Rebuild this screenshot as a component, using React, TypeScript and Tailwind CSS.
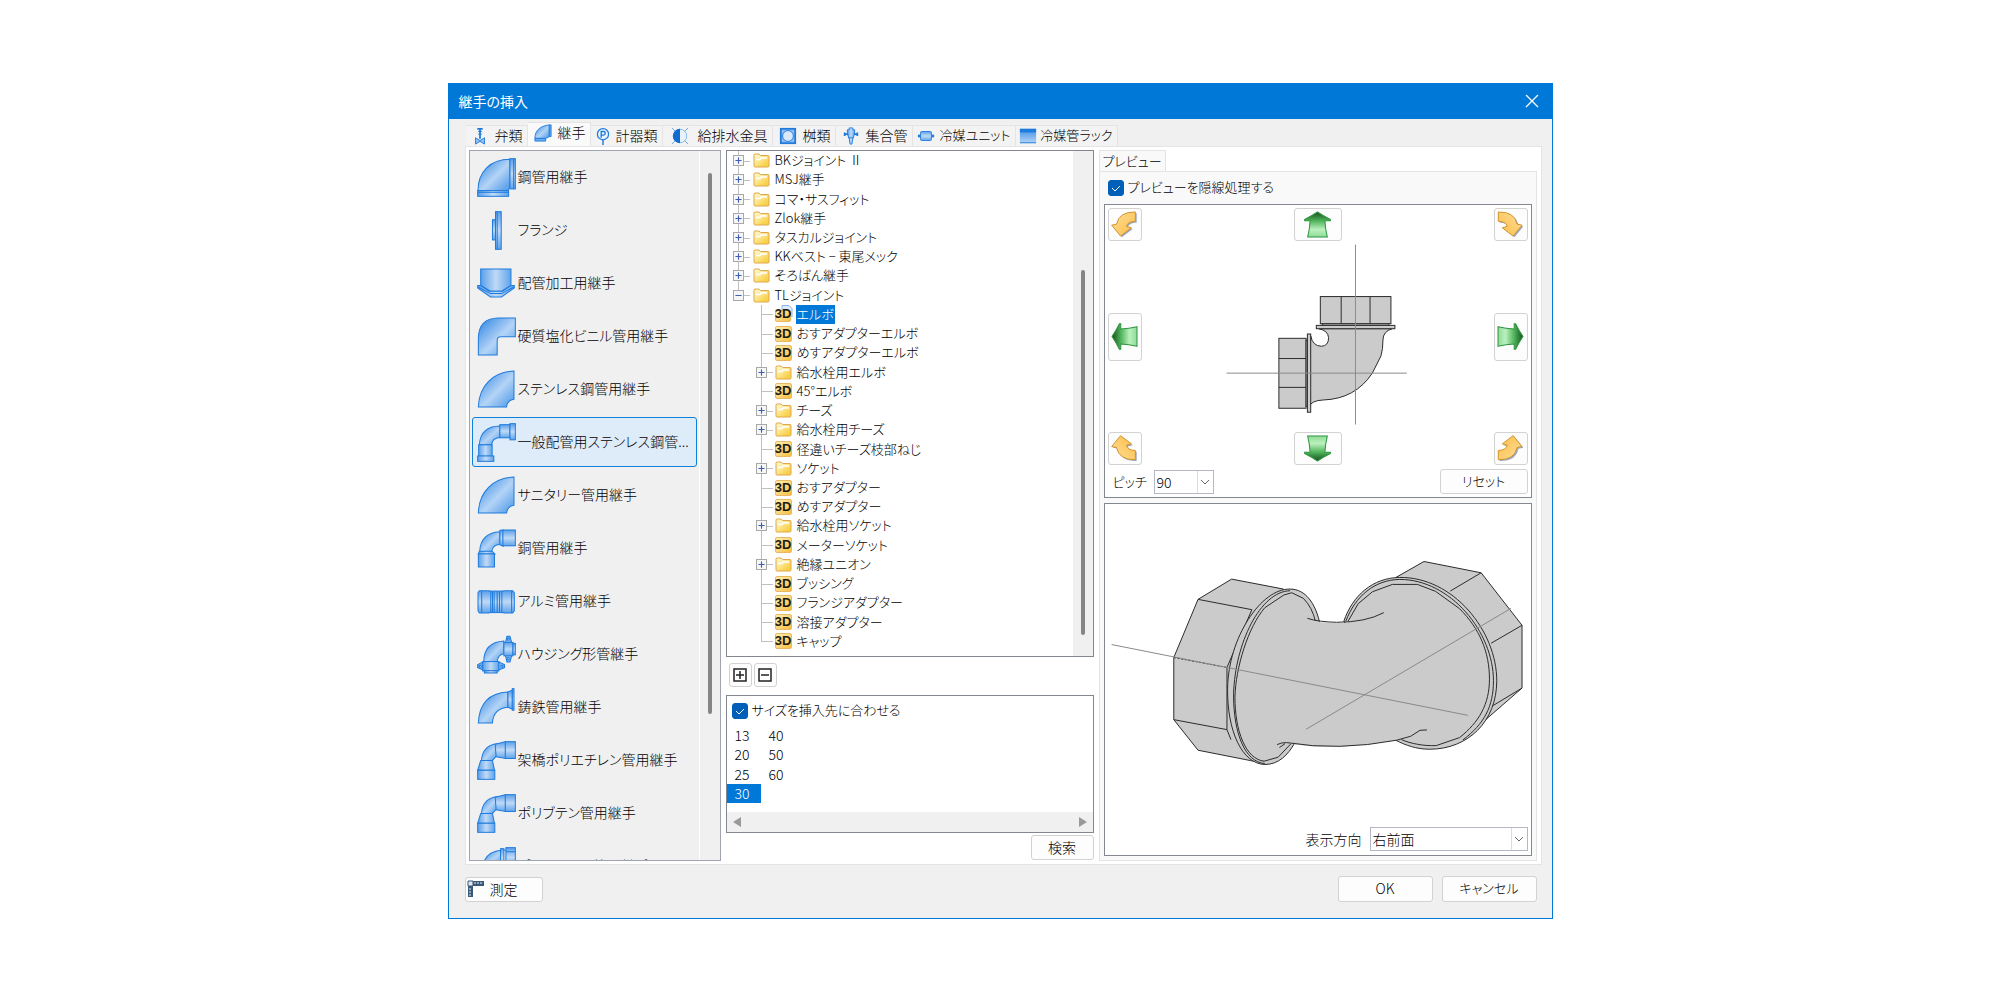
import type { ReactNode } from 'react';
import { Minus, Plus } from 'lucide-react';

const STROKE = '#1f7bdc';

const TABS = [
  { icon: 'valve', label: '弁類', width: 'w-[62px]' },
  { icon: 'elbow', label: '継手', width: 'w-[63px]' },
  { icon: 'meter', label: '計器類', width: 'w-[72px]' },
  { icon: 'fixture', label: '給排水金具', width: 'w-[110px]' },
  { icon: 'basin', label: '桝類', width: 'w-[63px]' },
  { icon: 'header', label: '集合管', width: 'w-[77px]' },
  { icon: 'unit', label: '冷媒ユニット', width: 'w-[103px] text-[13px]' },
  { icon: 'rack', label: '冷媒管ラック', width: 'w-[102px] text-[13px]' },
];

const CATEGORIES = [
  { icon: 'steel', label: '鋼管用継手' },
  { icon: 'flange', label: 'フランジ' },
  { icon: 'saddle', label: '配管加工用継手' },
  { icon: 'pvc', label: '硬質塩化ビニル管用継手' },
  { icon: 'stainless', label: 'ステンレス鋼管用継手' },
  { icon: 'press', label: '一般配管用ステンレス鋼管...' },
  { icon: 'stainless', label: 'サニタリー管用継手' },
  { icon: 'copper', label: '銅管用継手' },
  { icon: 'coupling', label: 'アルミ管用継手' },
  { icon: 'housing', label: 'ハウジング形管継手' },
  { icon: 'cast', label: '鋳鉄管用継手' },
  { icon: 'poly', label: '架橋ポリエチレン管用継手' },
  { icon: 'poly', label: 'ポリブテン管用継手' },
  { icon: 'union', label: 'ポリエチレン管用継手' },
];
const SELECTED_CATEGORY = 5;

type TreeNode = { level: 1 | 2; kind: 'folder' | 'model'; label: string };

const TREE: TreeNode[] = [
  { level: 1, kind: 'folder', label: 'BKジョイント Ⅱ' },
  { level: 1, kind: 'folder', label: 'MSJ継手' },
  { level: 1, kind: 'folder', label: 'コマ・サスフィット' },
  { level: 1, kind: 'folder', label: 'Zlok継手' },
  { level: 1, kind: 'folder', label: 'タスカルジョイント' },
  { level: 1, kind: 'folder', label: 'KKベスト − 東尾メック' },
  { level: 1, kind: 'folder', label: 'そろばん継手' },
  { level: 1, kind: 'folder', label: 'TLジョイント' },
  { level: 2, kind: 'model', label: 'エルボ' },
  { level: 2, kind: 'model', label: 'おすアダプターエルボ' },
  { level: 2, kind: 'model', label: 'めすアダプターエルボ' },
  { level: 2, kind: 'folder', label: '給水栓用エルボ' },
  { level: 2, kind: 'model', label: '45°エルボ' },
  { level: 2, kind: 'folder', label: 'チーズ' },
  { level: 2, kind: 'folder', label: '給水栓用チーズ' },
  { level: 2, kind: 'model', label: '径違いチーズ枝部ねじ' },
  { level: 2, kind: 'folder', label: 'ソケット' },
  { level: 2, kind: 'model', label: 'おすアダプター' },
  { level: 2, kind: 'model', label: 'めすアダプター' },
  { level: 2, kind: 'folder', label: '給水栓用ソケット' },
  { level: 2, kind: 'model', label: 'メーターソケット' },
  { level: 2, kind: 'folder', label: '絶縁ユニオン' },
  { level: 2, kind: 'model', label: 'ブッシング' },
  { level: 2, kind: 'model', label: 'フランジアダプター' },
  { level: 2, kind: 'model', label: '溶接アダプター' },
  { level: 2, kind: 'model', label: 'キャップ' },
];
const OPEN_NODE = 7;
const SELECTED_NODE = 8;

const SIZES = ['13', '20', '25', '30', '40', '50', '60'];
const SELECTED_SIZE = '30';

const BUTTON = 'rounded-[3px] border border-[#d2d2d2] bg-[#fdfdfd]';

/* Gradients shared by every icon on the page */
function Gradients() {
  return (
    <svg className="absolute h-0 w-0" aria-hidden="true">
      <defs>
        <linearGradient id="pipeX">
          <stop offset="0" stopColor="#5a9fea" />
          <stop offset="0.5" stopColor="#c0daf7" />
          <stop offset="1" stopColor="#5fa3eb" />
        </linearGradient>
        <linearGradient id="pipeY" x2="0" y2="1">
          <stop offset="0" stopColor="#5a9fea" />
          <stop offset="0.5" stopColor="#c0daf7" />
          <stop offset="1" stopColor="#5fa3eb" />
        </linearGradient>
        <linearGradient id="pipeD" x2="1" y2="1">
          <stop offset="0.1" stopColor="#4391e6" />
          <stop offset="0.55" stopColor="#b4d4f6" />
          <stop offset="0.9" stopColor="#5fa3eb" />
        </linearGradient>
        <linearGradient id="rackY" x2="0" y2="1">
          <stop offset="0" stopColor="#3f8fe4" />
          <stop offset="1" stopColor="#b4d4f6" />
        </linearGradient>
        <linearGradient id="folder" x2="1" y2="1">
          <stop offset="0.2" stopColor="#fff3b8" />
          <stop offset="0.8" stopColor="#f8d14a" />
        </linearGradient>
        <linearGradient id="green" x2="0" y2="1">
          <stop offset="0" stopColor="#174f20" />
          <stop offset="0.35" stopColor="#4fb45a" />
          <stop offset="0.7" stopColor="#baf0bd" />
          <stop offset="1" stopColor="#90dc98" />
        </linearGradient>
        <linearGradient id="amber" x2="1" y2="1">
          <stop offset="0" stopColor="#ffe09a" />
          <stop offset="1" stopColor="#fcbb45" />
        </linearGradient>
      </defs>
    </svg>
  );
}

const TAB_ICONS: Record<string, ReactNode> = {
  valve: (
    <>
      <path d="M7 2h6M10 2v11" stroke={STROKE} strokeWidth="2" />
      <path d="M8 5h4M8 8h4" stroke={STROKE} />
      <path d="M5 12v7l5-3 5 3v-7l-5 3z" fill="#8fbdf0" stroke={STROKE} />
    </>
  ),
  elbow: (
    <>
      <path d="M1 16C1 7 7 2 17 1v13l-4 2z" fill="url(#pipeD)" stroke={STROKE} />
      <path d="M17 1h2v13h-2zM1 16h12v3H1z" fill="#6aaaf0" stroke={STROKE} />
    </>
  ),
  meter: (
    <>
      <path d="M10 14v6" stroke={STROKE} strokeWidth="1.6" />
      <circle cx="10" cy="8" r="6.2" fill="#eaf3fd" stroke={STROKE} strokeWidth="1.4" />
      <path d="M8 12V5h2.500q2 0 2 2t-2 2H8" fill="none" stroke={STROKE} strokeWidth="1.500" />
    </>
  ),
  fixture: (
    <>
      <path d="M1 1l4 4M19 1l-4 4M1 19l4-4M19 19l-4-4" stroke="#5a9fea" />
      <circle cx="10" cy="10" r="7.500" fill="#e8f2fd" stroke="#7ab2ee" />
      <path d="M10 2a8 8 0 0 0 0 16z" fill="#0f6bd0" />
    </>
  ),
  basin: (
    <>
      <rect x="2" y="2" width="16" height="16" fill="#8fbdf0" stroke={STROKE} strokeWidth="2" />
      <circle cx="10" cy="10" r="6" fill="#d9e9fb" stroke={STROKE} />
    </>
  ),
  header: (
    <>
      <path d="M8 1h4v2h2v5l-2 5-1 6H9l-1-6-2-5V3h2z" fill="url(#pipeX)" stroke={STROKE} />
      <path d="M3 8h4M13 8h4M3 6v4M17 6v4" stroke={STROKE} strokeWidth="2" />
      <path d="M7 12h6" stroke={STROKE} />
    </>
  ),
  unit: (
    <>
      <path d="M1 10h18" stroke={STROKE} strokeWidth="3" />
      <rect x="4" y="5" width="12" height="10" rx="1" fill="url(#pipeY)" stroke={STROKE} />
    </>
  ),
  rack: (
    <>
      <rect x="1" y="2" width="18" height="16" fill="url(#rackY)" />
      <rect x="1" y="2" width="18" height="4" fill="#1f7bdc" />
      <path d="M1 17.500h18" stroke={STROKE} />
    </>
  ),
};

const CATEGORY_ICONS: Record<string, ReactNode> = {
  steel: (
    <>
      <path d="M3 97C3 40 40 4 98 4v83l-7 10z" fill="url(#pipeD)" />
      <rect x="98" y="2" width="16" height="90" fill="url(#pipeY)" />
      <path d="M109 2v90" />
      <rect x="2" y="97" width="92" height="17" fill="url(#pipeX)" />
      <path d="M2 102h92" />
    </>
  ),
  flange: (
    <>
      <rect x="46" y="26" width="10" height="60" fill="url(#pipeY)" />
      <rect x="55" y="2" width="17" height="112" fill="url(#pipeY)" />
      <path d="M60 2v112" />
    </>
  ),
  saddle: (
    <>
      <path d="M11 15h90v49L73 81H40L11 64z" fill="url(#pipeX)" />
      <path d="M2 64h9l25 17h40l25-17h10v7L73 98H40L2 71z" fill="url(#pipeX)" />
      <path d="M5 69l35 19h33l35-19" fill="none" />
    </>
  ),
  pvc: <path d="M4 113V62Q6 4 62 3h52v56H71q-11 0-11 11v43z" fill="url(#pipeD)" />,
  stainless: <path d="M4 110C6 46 48 6 110 3v84q-20 3-22 23z" fill="url(#pipeD)" />,
  press: (
    <>
      <path d="M7 65Q10 10 68 9v34q-24 2-24 22z" fill="url(#pipeD)" />
      <rect x="68" y="5" width="30" height="39" fill="url(#pipeY)" />
      <rect x="98" y="2" width="16" height="48" fill="url(#pipeY)" />
      <rect x="5" y="65" width="40" height="34" fill="url(#pipeX)" />
      <rect x="2" y="98" width="48" height="16" fill="url(#pipeX)" />
    </>
  ),
  copper: (
    <>
      <path d="M8 67Q10 12 68 8v37q-22 2-24 22z" fill="url(#pipeD)" />
      <path d="M68 4l10-1v48l-10-4z" fill="url(#pipeY)" />
      <rect x="77" y="3" width="37" height="47" fill="url(#pipeY)" />
      <path d="M7 66h38l8 8H4z" fill="url(#pipeX)" />
      <rect x="4" y="74" width="48" height="39" fill="url(#pipeX)" />
    </>
  ),
  coupling: (
    <>
      <rect x="38" y="27" width="38" height="64" fill="url(#pipeY)" />
      <path d="M7 26h28l6 3v60l-6 3H7l-4-6V32z" fill="url(#pipeY)" />
      <path d="M80 26h26l5 6v54l-5 6H80l-6-3V29z" fill="url(#pipeY)" />
      <path d="M14 26v66M46 28v62M51 28v62M60 28v62M67 28v62M103 26v66" />
    </>
  ),
  housing: (
    <>
      <path d="M20 80Q20 22 80 18v38q-18 2-20 24z" fill="url(#pipeD)" />
      <path d="M85 22l4-18h9l5 18v40l-5 18h-9l-4-18z" fill="url(#pipeY)" />
      <rect x="80" y="22" width="27" height="40" fill="url(#pipeY)" />
      <rect x="107" y="25" width="7" height="34" fill="url(#pipeY)" />
      <circle cx="93" cy="12" r="3" fill="#e8f2fd" />
      <circle cx="93" cy="70" r="3" fill="#e8f2fd" />
      <path d="M2 88l16-8v24L2 97zM82 88l-18-8v24l18-7z" fill="url(#pipeX)" />
      <rect x="17" y="79" width="48" height="28" fill="url(#pipeX)" />
      <rect x="22" y="106" width="38" height="7" fill="url(#pipeX)" />
      <circle cx="10" cy="93" r="3" fill="#e8f2fd" />
      <circle cx="74" cy="93" r="3" fill="#e8f2fd" />
    </>
  ),
  cast: (
    <>
      <path d="M4 104Q8 16 92 12v45q-44 4-46 47z" fill="url(#pipeD)" />
      <path d="M92 12l13-6v57l-13-6z" fill="url(#pipeY)" />
      <rect x="105" y="2" width="5" height="64" fill="url(#pipeY)" />
    </>
  ),
  poly: (
    <>
      <path d="M13 60Q16 12 60 8v34l-16 18z" fill="url(#pipeD)" />
      <path d="M54 10l31-8v50l-28-5z" fill="url(#pipeY)" />
      <rect x="84" y="2" width="30" height="50" fill="url(#pipeY)" />
      <path d="M11 58h35l6 29H2z" fill="url(#pipeX)" />
      <rect x="2" y="87" width="51" height="27" fill="url(#pipeX)" />
    </>
  ),
  union: (
    <>
      <path d="M16 60Q24 14 72 10v50z" fill="url(#pipeD)" />
      <rect x="70" y="5" width="10" height="55" fill="url(#pipeY)" />
      <rect x="86" y="2" width="28" height="58" fill="url(#pipeY)" />
      <path d="M86 14h28M80 10h6" />
    </>
  ),
};

/* A tick box whose check mark is stacked in the same grid cell */
function CheckField({ id, label }: { id: string; label: string }) {
  return (
    <div className="flex h-4 items-center gap-1">
      <span className="grid">
        <input
          id={id}
          type="checkbox"
          defaultChecked
          className="col-start-1 row-start-1 h-4 w-4 appearance-none rounded-[3px] border border-[#868686] bg-white checked:border-[#005fb8] checked:bg-[#005fb8]"
        />
        <svg viewBox="0 0 16 16" className="pointer-events-none col-start-1 row-start-1 h-4 w-4">
          <path d="M4 8l3 3 5-5" fill="none" stroke="#fff" />
        </svg>
      </span>
      <label htmlFor={id} className="pb-[2px] text-[13px]">
        {label}
      </label>
    </div>
  );
}

function Dropdown({ id, value, className }: { id: string; value: string; className: string }) {
  return (
    <span className={`grid h-6 ${className}`}>
      <select
        id={id}
        defaultValue={value}
        className="col-start-1 row-start-1 min-w-0 appearance-none border border-[#b4b8c4] bg-white pr-5 pl-0.5 outline-none"
      >
        <option>{value}</option>
      </select>
      <span className="pointer-events-none col-start-1 row-start-1 my-px mr-px flex w-4 items-center justify-center justify-self-end border-l border-[#dcdce0]">
        <svg viewBox="0 0 10 6" className="h-[6px] w-[10px]">
          <path d="M1 1l4 4 4-4" fill="none" stroke="#666" />
        </svg>
      </span>
    </span>
  );
}

function TreeRow({ node, index }: { node: TreeNode; index: number }) {
  const isLast = index === OPEN_NODE || index === TREE.length - 1;
  const selected = index === SELECTED_NODE;
  return (
    <li className={`flex min-h-0 items-center ${node.level === 1 ? 'pl-[6px]' : 'pl-[29px]'}`}>
      {/* Guide lines and the expander */}
      <span className={`relative flex items-center self-stretch ${node.level === 1 ? 'w-5' : 'w-[19px]'}`}>
        <span className={`absolute top-0 left-[5px] w-px bg-[#c0c0c0] ${isLast ? 'bottom-1/2' : 'bottom-0'}`} />
        <span className="absolute top-1/2 left-[5px] h-px w-3 bg-[#c0c0c0]" />
        {node.kind === 'folder' && (
          <button
            type="button"
            aria-label="展開"
            className="relative flex h-[11px] w-[11px] items-center justify-center border border-[#a8a8a8] bg-[#f6f6f6] text-[#3c5fb4]"
          >
            {index === OPEN_NODE ? <Minus size={9} strokeWidth={3} /> : <Plus size={9} strokeWidth={3} />}
          </button>
        )}
      </span>
      {node.kind === 'folder' ? (
        <svg viewBox="0 0 17 15" className="h-[15px] w-[17px] shrink-0">
          <path d="M1 2q0-1 1-1h4l1.500 1.500H15q1 0 1 1V13q0 1-1 1H2q-1 0-1-1z" fill="url(#folder)" stroke="#e0a84c" />
          <path d="M3 6.500h4l1-1.500h6" fill="none" stroke="#fff" strokeWidth="1.500" />
        </svg>
      ) : (
        <span className="relative flex h-4 w-[17px] shrink-0 items-center justify-center">
          {selected && (
            <svg viewBox="0 0 12 12" className="absolute -top-px -right-px h-3 w-3">
              <path d="M1 0.500h7l3 3V12H1z" fill="#dcebfb" stroke="#8db4e8" />
            </svg>
          )}
          <span
            className={`absolute bottom-0 left-0 rounded-[2px] border border-[#eab765] bg-linear-to-br from-[#fff0b0] to-[#f5bf3c] ${selected ? 'h-3 w-4' : 'h-4 w-full'}`}
          />
          <span className="relative font-['Liberation_Sans',sans-serif] text-[13px] leading-4 font-bold text-[#1c1a10]">3D</span>
        </span>
      )}
      <button
        type="button"
        className={`ml-1 self-stretch px-px pb-px text-left text-[13px] leading-[18px] whitespace-nowrap ${selected ? 'bg-[#0078d7] text-white' : ''}`}
      >
        {node.label}
      </button>
    </li>
  );
}

function GreenArrow({ turn }: { turn: number }) {
  return (
    <svg viewBox="0 0 80 80" className="h-[27px] w-[27px]">
      <path
        transform={`rotate(${turn} 40 40)`}
        d="M40 3Q56 14 78 25v4H62q1 24 7 48H11q6-24 7-48H2v-4Q24 14 40 3z"
        fill="url(#green)"
        stroke="#2f9440"
        strokeWidth="3"
      />
    </svg>
  );
}

function AmberArrow({ flip }: { flip: string }) {
  const d = 'M74 3Q24 2 17 40L2 43l27 33 33-25-15-4q3-15 27-16z';
  return (
    <svg viewBox="0 0 82 82" className="h-[27px] w-[27px]">
      <path transform={`translate(4 4) ${flip}`} d={d} fill="#9aa6c4" />
      <path transform={flip} d={d} fill="url(#amber)" stroke="#cf942c" strokeWidth="3" />
    </svg>
  );
}

function RotateButton({ label, className, children }: { label: string; className: string; children: ReactNode }) {
  return (
    <button type="button" aria-label={label} className={`flex items-center justify-center ${BUTTON} ${className}`}>
      {children}
    </button>
  );
}

/* Flat view of the elbow with its centre lines */
function ElbowFlat() {
  return (
    <svg viewBox="153 303 1062 573" className="h-full w-full min-w-0">
      <g fill="#cbcbcb" stroke="#2b2b2b" strokeWidth="3">
        <path d="M662 588q6 30 32 31 22-1 22-26-2-22-30-27h222q-28 8-28 34 0 28-6 48l-26 52q-52 78-148 81-38 1-46 25z" />
        <rect x="691" y="469" width="213" height="82" />
        <path d="M754 469v82M841 469v82" />
        <rect x="697" y="551" width="201" height="5" />
        <rect x="679" y="556" width="237" height="10" />
        <rect x="566" y="595" width="82" height="211" />
        <path d="M566 656h82M566 743h82" />
        <rect x="648" y="601" width="5" height="199" />
        <rect x="652" y="582" width="10" height="236" />
      </g>
      <path d="M797 312v543M408 700h544" stroke="#8a8a8a" strokeWidth="3" />
    </svg>
  );
}

/* Perspective view of the elbow */
function ElbowSolid() {
  return (
    <svg viewBox="43 43 1282 966" className="block w-full">
      <g fill="#cbcbcb" stroke="#2b2b2b" strokeWidth="3" strokeLinejoin="round">
        {/* Hexagon nuts */}
        <path d="M424 269l156 30-60 524-40-8-157-31-73-92V505l73-175z" />
        <path d="M323 330l162 31-75 174v187l12 30M250 692l160 30" fill="none" />
        <path d="M250 505l160 30" strokeDasharray="7 4" />
        <path d="M915 266l88-50 172 34 123 158v189l-115 100z" />
        <path d="M1175 250l-93 55M1298 408l-93 54M1298 597l-88 53" />

        {/* Left flange */}
        <path d="M600 299c48 0 76 46 88 97l-76 369c-18 32-46 62-88 62-68-2-114-100-112-230 2-150 100-300 188-298z" />
        <path d="M600 304c-90 2-166 160-170 310-1 118 34 206 94 210" fill="none" />
        <path d="M605 310l-24 7-57 38c-50 58-88 180-90 270 0 100 32 186 88 192l42-12 38-40M605 310l35 17c18 18 30 42 36 68" fill="none" />

        {/* Right flange */}
        <path d="M762 395c26-76 86-130 168-131 160-2 292 160 292 311 0 122-86 206-202 206-40 0-72-12-102-27z" />
        <path d="M768 395c28-74 86-124 162-125 152 0 282 158 282 305 0 78-28 130-92 178" fill="none" />
        <path d="M775 395l30-52 43-36 60-22h75l55 21 72 52c60 60 90 130 90 212 0 76-32 130-90 176l-70 24c-36 2-78-6-105-18" fill="none" />

        {/* Body between the flanges */}
        <path d="M640 392q110 18 200 0l140 340-60 22q-180 32-310 12z" stroke="none" />
        <path d="M652 387q34 11 88 12 88 0 142-29M561 767q12-6 28-6 156 26 331-7l43-12 28-18 21-1M568 776l17-12" fill="none" />
      </g>
      <path d="M63 466l1072 213M648 721l617-364" stroke="#8a8a8a" strokeWidth="3" />
    </svg>
  );
}

export default function App() {
  return (
    <div className="min-h-screen bg-white px-4 py-[83px] font-['Noto_Sans_CJK_JP',sans-serif] text-[14px] leading-5 font-light text-black [font-feature-settings:'palt']">
      <Gradients />
      <div role="dialog" aria-labelledby="title" className="mx-auto w-full max-w-[1105px] border border-[#0078d7] bg-[#f0f0f0]">
        {/* Title bar */}
        <div className="flex h-[35px] items-center justify-between bg-[#0078d7] pr-[13px] pb-[2px] pl-[10px] text-white">
          <h1 id="title" className="font-normal">
            継手の挿入
          </h1>
          <button type="button" aria-label="閉じる">
            <svg viewBox="0 0 14 14" className="h-[14px] w-[14px]">
              <path d="M1 1l12 12M13 1L1 13" stroke="#fff" strokeWidth="1.3" />
            </svg>
          </button>
        </div>

        {/* Tabs */}
        <div role="tablist" className="flex h-[27px] items-end pl-[17px]">
          {TABS.map((tab) => {
            const active = tab.icon === 'elbow';
            return (
              <button
                key={tab.icon}
                type="button"
                role="tab"
                aria-selected={active}
                className={`flex items-center border-t border-r border-[#e4e4e4] pr-1 ${tab.width} ${active ? 'h-6 bg-[#fafafa] pb-1' : 'h-[21px] bg-[#f3f3f3]'}`}
              >
                <span className="flex flex-1 justify-center">
                  <svg viewBox="0 0 20 20" className="h-[18px] w-[18px]">
                    {TAB_ICONS[tab.icon]}
                  </svg>
                </span>
                <span className="pb-[2px] whitespace-nowrap">{tab.label}</span>
              </button>
            );
          })}
        </div>

        <div className="mr-[10px] ml-4 flex gap-[5px] border border-[#e4e4e4] bg-white py-[3px] pr-1 pl-[3px]">
          {/* Categories */}
          <div className="flex h-[711px] w-[252px] shrink-0 overflow-hidden border border-[#a0a4b0] bg-[#f0f0f0]">
            <div className="min-w-0 flex-1 border-r border-white px-[2px] pt-px">
              {CATEGORIES.map((item, index) => (
                <button
                  key={item.label}
                  type="button"
                  className={`mb-[3px] flex h-[50px] w-full items-center gap-[2px] rounded-[3px] border pl-1 text-left whitespace-nowrap ${index === SELECTED_CATEGORY ? 'border-[#0f7fd8] bg-[#deecf9]' : 'border-transparent'}`}
                >
                  <svg viewBox="0 0 116 116" className="h-[39px] w-[39px] shrink-0" stroke={STROKE} strokeWidth="3">
                    {CATEGORY_ICONS[item.icon]}
                  </svg>
                  <span className="pb-[2px]">{item.label}</span>
                </button>
              ))}
            </div>
            <div className="flex w-5 justify-center pt-[22px]">
              <span className="h-[541px] w-1 rounded-full bg-[#858585]" />
            </div>
          </div>

          {/* Tree and sizes */}
          <div className="flex w-[368px] shrink-0 flex-col">
            <div className="flex h-[507px] border border-[#828790]">
              <ul className="grid h-[500px] flex-1 auto-rows-fr">
                {TREE.map((node, index) => (
                  <TreeRow key={node.label} node={node} index={index} />
                ))}
              </ul>
              <div className="flex w-5 justify-center bg-[#f0f0f0] pt-[119px]">
                <span className="h-[365px] w-1 rounded-full bg-[#858585]" />
              </div>
            </div>

            <div className="mt-[6px] flex gap-[2px] pl-[3px]">
              <button type="button" aria-label="すべて展開" className={`flex h-6 w-[23px] items-center justify-center ${BUTTON}`}>
                <svg viewBox="0 0 14 14" className="h-[14px] w-[14px]" fill="none" stroke="#222" strokeWidth="1.500">
                  <path d="M1 1h12v12H1zM3 7h8M7 3v8" />
                </svg>
              </button>
              <button type="button" aria-label="すべて閉じる" className={`flex h-6 w-[23px] items-center justify-center ${BUTTON}`}>
                <svg viewBox="0 0 14 14" className="h-[14px] w-[14px]" fill="none" stroke="#222" strokeWidth="1.500">
                  <path d="M1 1h12v12H1zM3 7h8" />
                </svg>
              </button>
            </div>

            <div className="mt-2 border border-[#828790] pt-[7px]">
              <div className="pl-[5px]">
                <CheckField id="fit-size" label="サイズを挿入先に合わせる" />
              </div>
              <div className="mt-[7px] grid h-[77px] grid-flow-col grid-cols-[34px_34px] grid-rows-4">
                {SIZES.map((size) => (
                  <button
                    key={size}
                    type="button"
                    className={`pl-2 text-left leading-[19px] ${size === SELECTED_SIZE ? 'bg-[#0078d7] text-white' : ''}`}
                  >
                    {size}
                  </button>
                ))}
              </div>
              <div className="mt-[9px] flex h-5 items-center justify-between bg-[#f0f0f0] px-[6px]">
                <svg viewBox="0 0 8 10" className="h-[10px] w-2">
                  <path d="M8 0v10L0 5z" fill="#999" />
                </svg>
                <svg viewBox="0 0 8 10" className="h-[10px] w-2">
                  <path d="M0 0v10l8-5z" fill="#999" />
                </svg>
              </div>
            </div>
            <button type="button" className={`mt-[2px] h-[25px] w-[63px] self-end pb-[2px] ${BUTTON}`}>
              検索
            </button>
          </div>

          {/* Preview */}
          <div className="flex min-w-0 flex-1 flex-col">
            <div role="tablist">
              <button
                type="button"
                role="tab"
                aria-selected="true"
                className="block h-[21px] w-[67px] border-x border-t border-[#e4e4e4] bg-[#f9f9f9] pb-[2px] text-center text-[13px]"
              >
                プレビュー
              </button>
            </div>
            <div className="flex flex-col border border-[#e4e4e4] bg-[#f9f9f9] pt-2 pr-1 pb-1 pl-1">
              <div className="pl-1">
                <CheckField id="hidden-line" label="プレビューを隠線処理する" />
              </div>

              <div className="mt-2 border border-[#828790] bg-white p-[3px]">
                <div className="grid grid-cols-[34px_minmax(0,1fr)_34px] grid-rows-[33px_191px_33px] place-items-center">
                  <RotateButton label="左上" className="h-full w-full">
                    <AmberArrow flip="" />
                  </RotateButton>
                  <RotateButton label="上" className="h-full w-12">
                    <GreenArrow turn={0} />
                  </RotateButton>
                  <RotateButton label="右上" className="h-full w-full">
                    <AmberArrow flip="translate(78 0) scale(-1 1)" />
                  </RotateButton>
                  <RotateButton label="左" className="h-12 w-full">
                    <GreenArrow turn={270} />
                  </RotateButton>
                  <ElbowFlat />
                  <RotateButton label="右" className="h-12 w-full">
                    <GreenArrow turn={90} />
                  </RotateButton>
                  <RotateButton label="左下" className="h-full w-full">
                    <AmberArrow flip="translate(0 78) scale(1 -1)" />
                  </RotateButton>
                  <RotateButton label="下" className="h-full w-12">
                    <GreenArrow turn={180} />
                  </RotateButton>
                  <RotateButton label="右下" className="h-full w-full">
                    <AmberArrow flip="translate(78 78) scale(-1 -1)" />
                  </RotateButton>
                </div>
                <div className="mt-1 flex items-center pl-[5px]">
                  <label htmlFor="pitch" className="w-[41px] text-[13px]">
                    ピッチ
                  </label>
                  <Dropdown id="pitch" value="90" className="w-[60px]" />
                  <button type="button" className={`ml-auto h-[25px] w-[88px] pb-px text-[13px] ${BUTTON}`}>
                    リセット
                  </button>
                </div>
              </div>

              <div className="mt-[5px] border border-[#828790] bg-white">
                <ElbowSolid />
                <div className="mt-[2px] mb-1 flex items-center justify-end gap-2 pr-[3px]">
                  <label htmlFor="direction">表示方向</label>
                  <Dropdown id="direction" value="右前面" className="w-[158px]" />
                </div>
              </div>
            </div>
          </div>
        </div>

        {/* Footer */}
        <div className="flex items-center gap-[9px] pt-[11px] pr-[15px] pb-4 pl-4">
          <button type="button" className={`mr-auto flex h-[25px] w-[78px] items-center gap-[5px] pl-px ${BUTTON}`}>
            <svg viewBox="0 0 18 18" className="h-[18px] w-[18px]">
              <path d="M1 1h16v5H6v11H1z" fill="#3c5878" />
              <path d="M1 1h5v5H1z" fill="#dfe8f0" stroke="#3c5878" />
              <path d="M8 2v2M11 2v2M14 2v2M2 9h2M2 12h2M2 15h2" stroke="#e8f0f8" />
            </svg>
            測定
          </button>
          <button type="button" className={`h-[26px] w-[95px] pb-[2px] ${BUTTON}`}>
            OK
          </button>
          <button type="button" className={`h-[26px] w-[95px] pb-[2px] text-[13px] ${BUTTON}`}>
            キャンセル
          </button>
        </div>
      </div>
    </div>
  );
}
